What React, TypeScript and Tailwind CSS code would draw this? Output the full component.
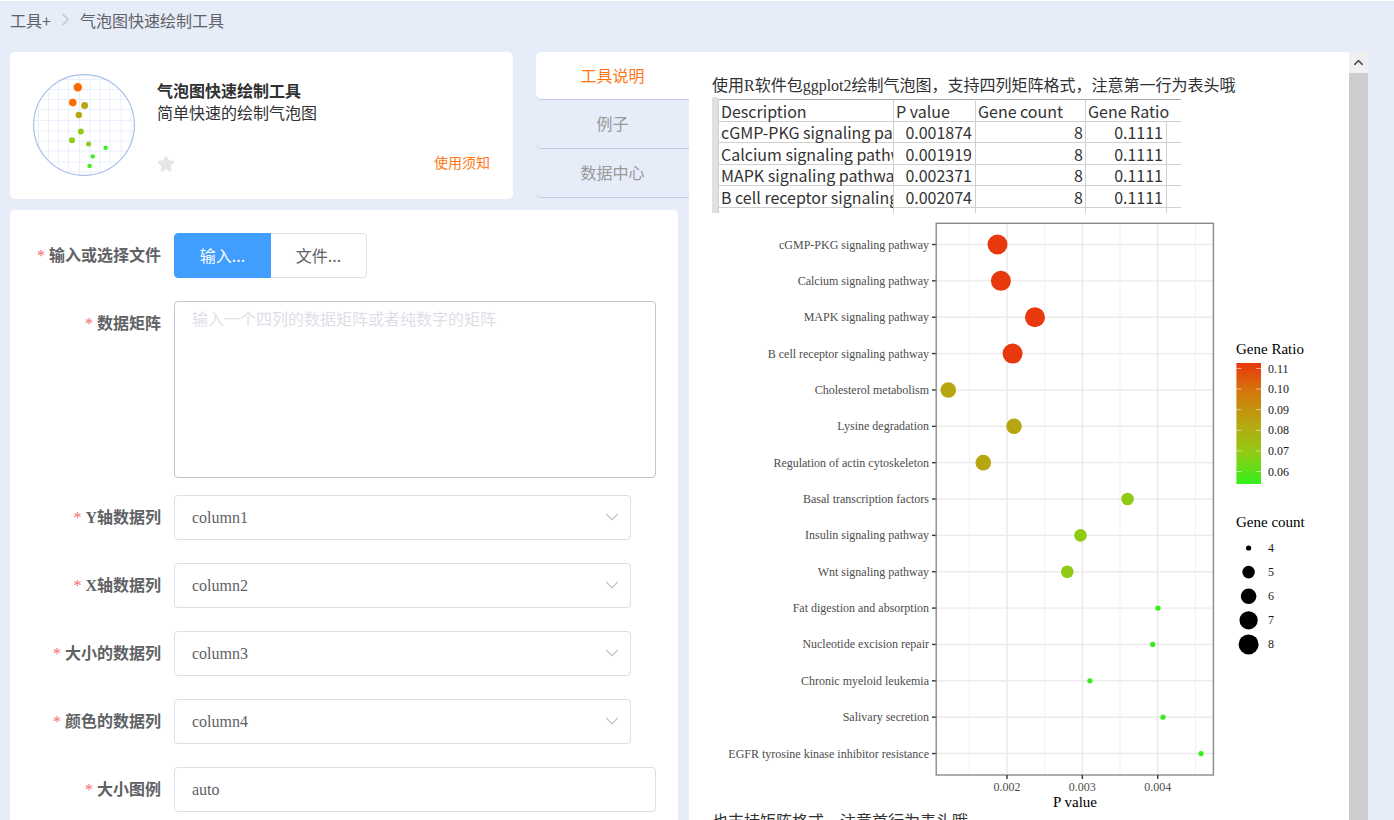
import React, { useState } from 'react';
import { ChevronDown, ChevronRight, ChevronUp, Star } from 'lucide-react';

const tabs = ['工具说明', '例子', '数据中心'];

const columns = ['column1', 'column2', 'column3', 'column4'];

const selectFields = [
  { id: 'y-column', label: 'Y轴数据列', value: 'column1' },
  { id: 'x-column', label: 'X轴数据列', value: 'column2' },
  { id: 'size-column', label: '大小的数据列', value: 'column3' },
  { id: 'color-column', label: '颜色的数据列', value: 'column4' },
];

// names are cut to the width of the sheet's first column
const sampleRows = [
  ['cGMP-PKG signaling pa', '0.001874', '8', '0.1111'],
  ['Calcium signaling pathw', '0.001919', '8', '0.1111'],
  ['MAPK signaling pathwa', '0.002371', '8', '0.1111'],
  ['B cell receptor signaling', '0.002074', '8', '0.1111'],
];

// p is in thousandths
const pathways = [
  { name: 'cGMP-PKG signaling pathway', p: 1.874, count: 8 },
  { name: 'Calcium signaling pathway', p: 1.919, count: 8 },
  { name: 'MAPK signaling pathway', p: 2.371, count: 8 },
  { name: 'B cell receptor signaling pathway', p: 2.074, count: 8 },
  { name: 'Cholesterol metabolism', p: 1.221, count: 6 },
  { name: 'Lysine degradation', p: 2.093, count: 6 },
  { name: 'Regulation of actin cytoskeleton', p: 1.685, count: 6 },
  { name: 'Basal transcription factors', p: 3.6, count: 5 },
  { name: 'Insulin signaling pathway', p: 2.975, count: 5 },
  { name: 'Wnt signaling pathway', p: 2.8, count: 5 },
  { name: 'Fat digestion and absorption', p: 4.003, count: 4 },
  { name: 'Nucleotide excision repair', p: 3.934, count: 4 },
  { name: 'Chronic myeloid leukemia', p: 3.1, count: 4 },
  { name: 'Salivary secretion', p: 4.07, count: 4 },
  { name: 'EGFR tyrosine kinase inhibitor resistance', p: 4.575, count: 4 },
];

const radius: Record<number, number> = { 4: 2.6, 5: 6.3, 6: 7.8, 7: 9.1, 8: 10 };
const fill: Record<number, string> = { 4: '#35ee1b', 5: '#90ca14', 6: '#b8a610', 8: '#e8380d' };

const xPos = (p: number) => 295 + (p - 2) * 75.35;
const yPos = (index: number) => 31.5 + index * 36.36;

function ToolLogo() {
  const lines = [5.5, 15.5, 25.5, 35.5, 46.5, 57, 67, 77, 88, 98];
  const dots: [number, number, number, string][] = [
    [44.8, 13.3, 4.2, '#ff6a00'],
    [39.8, 28.6, 3.8, '#ff6a00'],
    [51.6, 31.6, 3.5, '#b8a610'],
    [45.8, 41, 3.2, '#b8a610'],
    [47.8, 57.6, 3, '#90cc14'],
    [39, 66.2, 3, '#90cc14'],
    [55.6, 70, 2.5, '#90cc14'],
    [72.6, 73.8, 2.2, '#3cf01e'],
    [59.8, 82.4, 2.2, '#3cf01e'],
    [56.6, 91.9, 2.2, '#3cf01e'],
  ];
  return (
    <svg className="shrink-0" width="102" height="102" viewBox="0 0 102 102" aria-hidden="true">
      <clipPath id="logo-clip"><circle cx="51" cy="51" r="50" /></clipPath>
      <g clipPath="url(#logo-clip)" stroke="#e9effc">
        {lines.map((v) => <path key={v} d={`M0 ${v}H102M${v} 0V102`} />)}
      </g>
      <circle cx="51" cy="51" r="50.4" fill="none" stroke="#a9c0ea" strokeWidth="1.2" />
      {dots.map(([x, y, r, color]) => <circle key={`${x}-${y}`} cx={x} cy={y} r={r} fill={color} />)}
    </svg>
  );
}

function SampleTable() {
  return (
    <div className="h-[116px] w-[469px] overflow-hidden border-l-[6px] border-[#e0e0e0] pt-[2px] font-['Noto_Sans_CJK_SC',sans-serif] text-base leading-5 text-[#333]">
      <table className="w-full table-fixed border-collapse border-t border-t-[#a6a6a6] whitespace-nowrap">
        <colgroup>
          <col className="w-[175px]" />
          <col className="w-[82px]" />
          <col className="w-[110px]" />
          <col className="w-[81px]" />
          <col />
        </colgroup>
        <thead>
          <tr className="h-[22px] border-b border-[#d0d0d0]">
            <th className="border-x border-[#d0d0d0] p-0 pl-[2px] text-left font-normal">Description</th>
            <th className="border-r border-[#d0d0d0] p-0 pl-[2px] text-left font-normal">P value</th>
            <th className="border-r border-[#d0d0d0] p-0 pl-[2px] text-left font-normal">Gene count</th>
            <th colSpan={2} className="p-0 pl-[2px] text-left font-normal">Gene Ratio</th>
          </tr>
        </thead>
        <tbody>
          {sampleRows.map((row) => (
            <tr key={row[0]} className="border-b border-[#d0d0d0] odd:h-[21px] even:h-[22px]">
              <td className="border-x border-[#d0d0d0] p-0 pl-[2px]">
                <div className="overflow-x-clip">{row[0]}</div>
              </td>
              <td className="border-r border-[#d0d0d0] p-0 pr-[3px] text-right">{row[1]}</td>
              <td className="border-r border-[#d0d0d0] p-0 pr-[2px] text-right">{row[2]}</td>
              <td className="border-r border-[#d0d0d0] p-0 pr-[3px] text-right">{row[3]}</td>
              <td className="p-0" />
            </tr>
          ))}
          <tr className="h-2">
            <td className="border-x border-[#d0d0d0] p-0" />
            <td className="border-r border-[#d0d0d0] p-0" />
            <td className="border-r border-[#d0d0d0] p-0" />
            <td className="border-r border-[#d0d0d0] p-0" />
            <td className="p-0" />
          </tr>
        </tbody>
      </table>
    </div>
  );
}

function BubbleChart() {
  return (
    <svg className="block font-['Liberation_Serif',serif]" width="610" height="598" viewBox="0 0 610 598" role="img" aria-label="P value">
      <defs>
        <linearGradient id="ratio" x1="0" y1="0" x2="0" y2="1">
          <stop offset="0" stopColor="#e8380d" />
          <stop offset="0.25" stopColor="#d27a0d" />
          <stop offset="0.5" stopColor="#b8a610" />
          <stop offset="0.75" stopColor="#90cc14" />
          <stop offset="1" stopColor="#33f01b" />
        </linearGradient>
      </defs>

      {/* grid */}
      {[1.5, 2.5, 3.5, 4.5].map((p) => <path key={p} d={`M${xPos(p)} 10V562`} stroke="#f1f1f1" />)}
      {[2, 3, 4].map((p) => <path key={p} d={`M${xPos(p)} 10V562`} stroke="#ebebeb" strokeWidth="1.6" />)}
      {pathways.map((item, i) => <path key={item.name} d={`M224 ${yPos(i)}H501`} stroke="#ebebeb" strokeWidth="1.4" />)}

      {pathways.map((item, i) => (
        <g key={item.name}>
          <text x="217" y={yPos(i) + 4} textAnchor="end" fontSize="12" fill="#4d4d4d">{item.name}</text>
          <path d={`M220 ${yPos(i)}H224`} stroke="#333" strokeWidth="1.4" />
          <circle cx={xPos(item.p)} cy={yPos(i)} r={radius[item.count]} fill={fill[item.count]} />
        </g>
      ))}
      <rect x="224.2" y="10.3" width="277.2" height="551.7" fill="none" stroke="#8a8a8a" strokeWidth="1.4" />

      {[2, 3, 4].map((p) => (
        <g key={p}>
          <path d={`M${xPos(p)} 562V566`} stroke="#333" strokeWidth="1.4" />
          <text x={xPos(p)} y="578" textAnchor="middle" fontSize="12" fill="#4d4d4d">0.00{p}</text>
        </g>
      ))}
      <text x="363" y="594" textAnchor="middle" fontSize="15" fill="#000">P value</text>

      {/* legends */}
      <text x="524" y="141" fontSize="15" fill="#000">Gene Ratio</text>
      <rect x="524.4" y="150" width="24.6" height="121" fill="url(#ratio)" />
      {['0.11', '0.10', '0.09', '0.08', '0.07', '0.06'].map((label, i) => (
        <g key={label}>
          <path d={`M524.4 ${155.5 + i * 20.6}h5M544 ${155.5 + i * 20.6}h5`} stroke="#fff" strokeOpacity="0.55" />
          <text x="556" y={159.5 + i * 20.6} fontSize="12" fill="#1a1a1a">{label}</text>
        </g>
      ))}
      <text x="524" y="314" fontSize="15" fill="#000">Gene count</text>
      {[4, 5, 6, 7, 8].map((n, i) => (
        <g key={n}>
          <circle cx="536.6" cy={335 + i * 24.1} r={radius[n]} fill="#000" />
          <text x="556" y={339 + i * 24.1} fontSize="12" fill="#1a1a1a">{n}</text>
        </g>
      ))}
    </svg>
  );
}

function FieldLabel({ htmlFor, children }: { htmlFor?: string, children: React.ReactNode }) {
  return (
    <label htmlFor={htmlFor} className="w-[164px] shrink-0 pr-[13px] text-right font-bold leading-[45px] text-[#606266]">
      <span className="mr-1 font-normal text-[#f56c6c]">*</span>{children}
    </label>
  );
}

export default function App() {
  const [activeTab, setActiveTab] = useState(0);
  const [source, setSource] = useState('input');
  const [values, setValues] = useState<Record<string, string>>({});

  return (
    <div className="flex h-screen flex-col overflow-hidden border-t border-white bg-[#e6ecf8] font-['Liberation_Serif','Noto_Sans_CJK_SC',serif] text-base leading-[22px] text-[#303133]">
      <nav className="flex h-[51px] shrink-0 items-start gap-1 px-[10px] pt-2 font-['Noto_Sans_CJK_SC',sans-serif] text-[#606266]">
        <a href="#tools">工具+</a>
        <ChevronRight className="text-[#c0c4cc]" size={21} strokeWidth={1.5} />
        <span>气泡图快速绘制工具</span>
      </nav>

      <main className="flex min-h-0 flex-1 pl-[10px] pr-[26px]">
        <div className="flex w-1/2 flex-col">
          <div className="flex items-start gap-[23px]">
            <section className="flex h-[147px] flex-1 gap-[22px] rounded-[5px] bg-white px-[23px] pt-[22px]">
              <ToolLogo />
              <div className="flex flex-1 flex-col pt-[7px]">
                <h1 className="font-bold">气泡图快速绘制工具</h1>
                <p>简单快速的绘制气泡图</p>
                <div className="mt-[27px] flex items-center justify-between">
                  <button aria-label="收藏"><Star className="text-[#e6e6e6]" size={18} fill="currentColor" /></button>
                  <a href="#notice" className="text-sm leading-6 text-[#ff7714]">使用须知</a>
                </div>
              </div>
            </section>

            <div className="flex w-[153px] flex-col" role="tablist">
              {tabs.map((tab, i) => (
                <button
                  key={tab}
                  role="tab"
                  aria-selected={i === activeTab}
                  onClick={() => setActiveTab(i)}
                  className={`h-[49px] rounded-l-[5px] border-b border-[#c5cbe6] pt-[2px] first:h-12 ${i === activeTab ? 'bg-white text-[#ff7714]' : 'text-[#999]'}`}
                >
                  {tab}
                </button>
              ))}
            </div>
          </div>

          <form className="mr-[11px] mt-[11px] flex-1 overflow-hidden rounded-t-[5px] bg-white pr-[22px] pt-[23px]">
            <div className="mb-[23px] flex">
              <FieldLabel>输入或选择文件</FieldLabel>
              <div className="flex h-[45px] w-[193px] leading-[42px]" role="radiogroup" aria-label="输入或选择文件">
                <label className={`flex-1 rounded-l border text-center ${source === 'input' ? 'border-[#409eff] bg-[#409eff] text-white' : 'border-[#dcdfe6] text-[#606266]'}`}>
                  <input type="radio" name="source" className="sr-only" checked={source === 'input'} onChange={() => setSource('input')} />
                  <span className="font-['Noto_Sans_CJK_SC',sans-serif]">输入...</span>
                </label>
                <label className={`flex-1 rounded-r border border-l-0 text-center ${source === 'file' ? 'border-[#409eff] bg-[#409eff] text-white' : 'border-[#dcdfe6] text-[#606266]'}`}>
                  <input type="radio" name="source" className="sr-only" checked={source === 'file'} onChange={() => setSource('file')} />
                  <span className="font-['Noto_Sans_CJK_SC',sans-serif]">文件...</span>
                </label>
              </div>
            </div>

            <div className="mb-[17px] flex">
              <FieldLabel htmlFor="matrix">数据矩阵</FieldLabel>
              <textarea
                id="matrix"
                className="h-[177px] min-w-0 flex-1 resize-none rounded border border-[#c0c4cc] px-[17px] py-[7px] text-[#606266] placeholder:text-[#dcdfe6]"
                placeholder="输入一个四列的数据矩阵或者纯数字的矩阵"
              />
            </div>

            {selectFields.map((field) => (
              <div key={field.id} className="mb-[23px] flex">
                <FieldLabel htmlFor={field.id}>{field.label}</FieldLabel>
                <div className="relative mr-[25px] flex-1">
                  <select
                    id={field.id}
                    value={values[field.id] ?? field.value}
                    onChange={(e) => setValues({ ...values, [field.id]: e.target.value })}
                    className="h-[45px] w-full appearance-none rounded border border-[#dcdfe6] bg-white px-[17px] text-[#606266]"
                  >
                    {columns.map((c) => <option key={c}>{c}</option>)}
                  </select>
                  <ChevronDown className="pointer-events-none absolute right-2 top-[11px] text-[#c0c4cc]" size={22} strokeWidth={1.25} />
                </div>
              </div>
            ))}

            <div className="flex">
              <FieldLabel htmlFor="size-legend">大小图例</FieldLabel>
              <input id="size-legend" type="text" defaultValue="auto" className="h-[45px] min-w-0 flex-1 rounded border border-[#dcdfe6] px-[17px] text-[#606266]" />
            </div>
          </form>
        </div>

        <section className="flex w-1/2 overflow-hidden bg-white">
          <div className="min-w-0 flex-1 overflow-hidden px-[23px] pt-[23px]">
            <p>使用R软件包ggplot2绘制气泡图，支持四列矩阵格式，注意第一行为表头哦</p>
            <SampleTable />
            <BubbleChart />
            <p>也支持矩阵格式，注意首行为表头哦</p>
          </div>
          <div className="flex w-[19px] shrink-0 flex-col bg-[#cdcdcd]">
            <button aria-label="向上滚动" className="flex h-[21px] items-center justify-center bg-[#f0f0f0] text-[#505050]">
              <ChevronUp size={15} strokeWidth={2.5} />
            </button>
          </div>
        </section>
      </main>
    </div>
  );
}
